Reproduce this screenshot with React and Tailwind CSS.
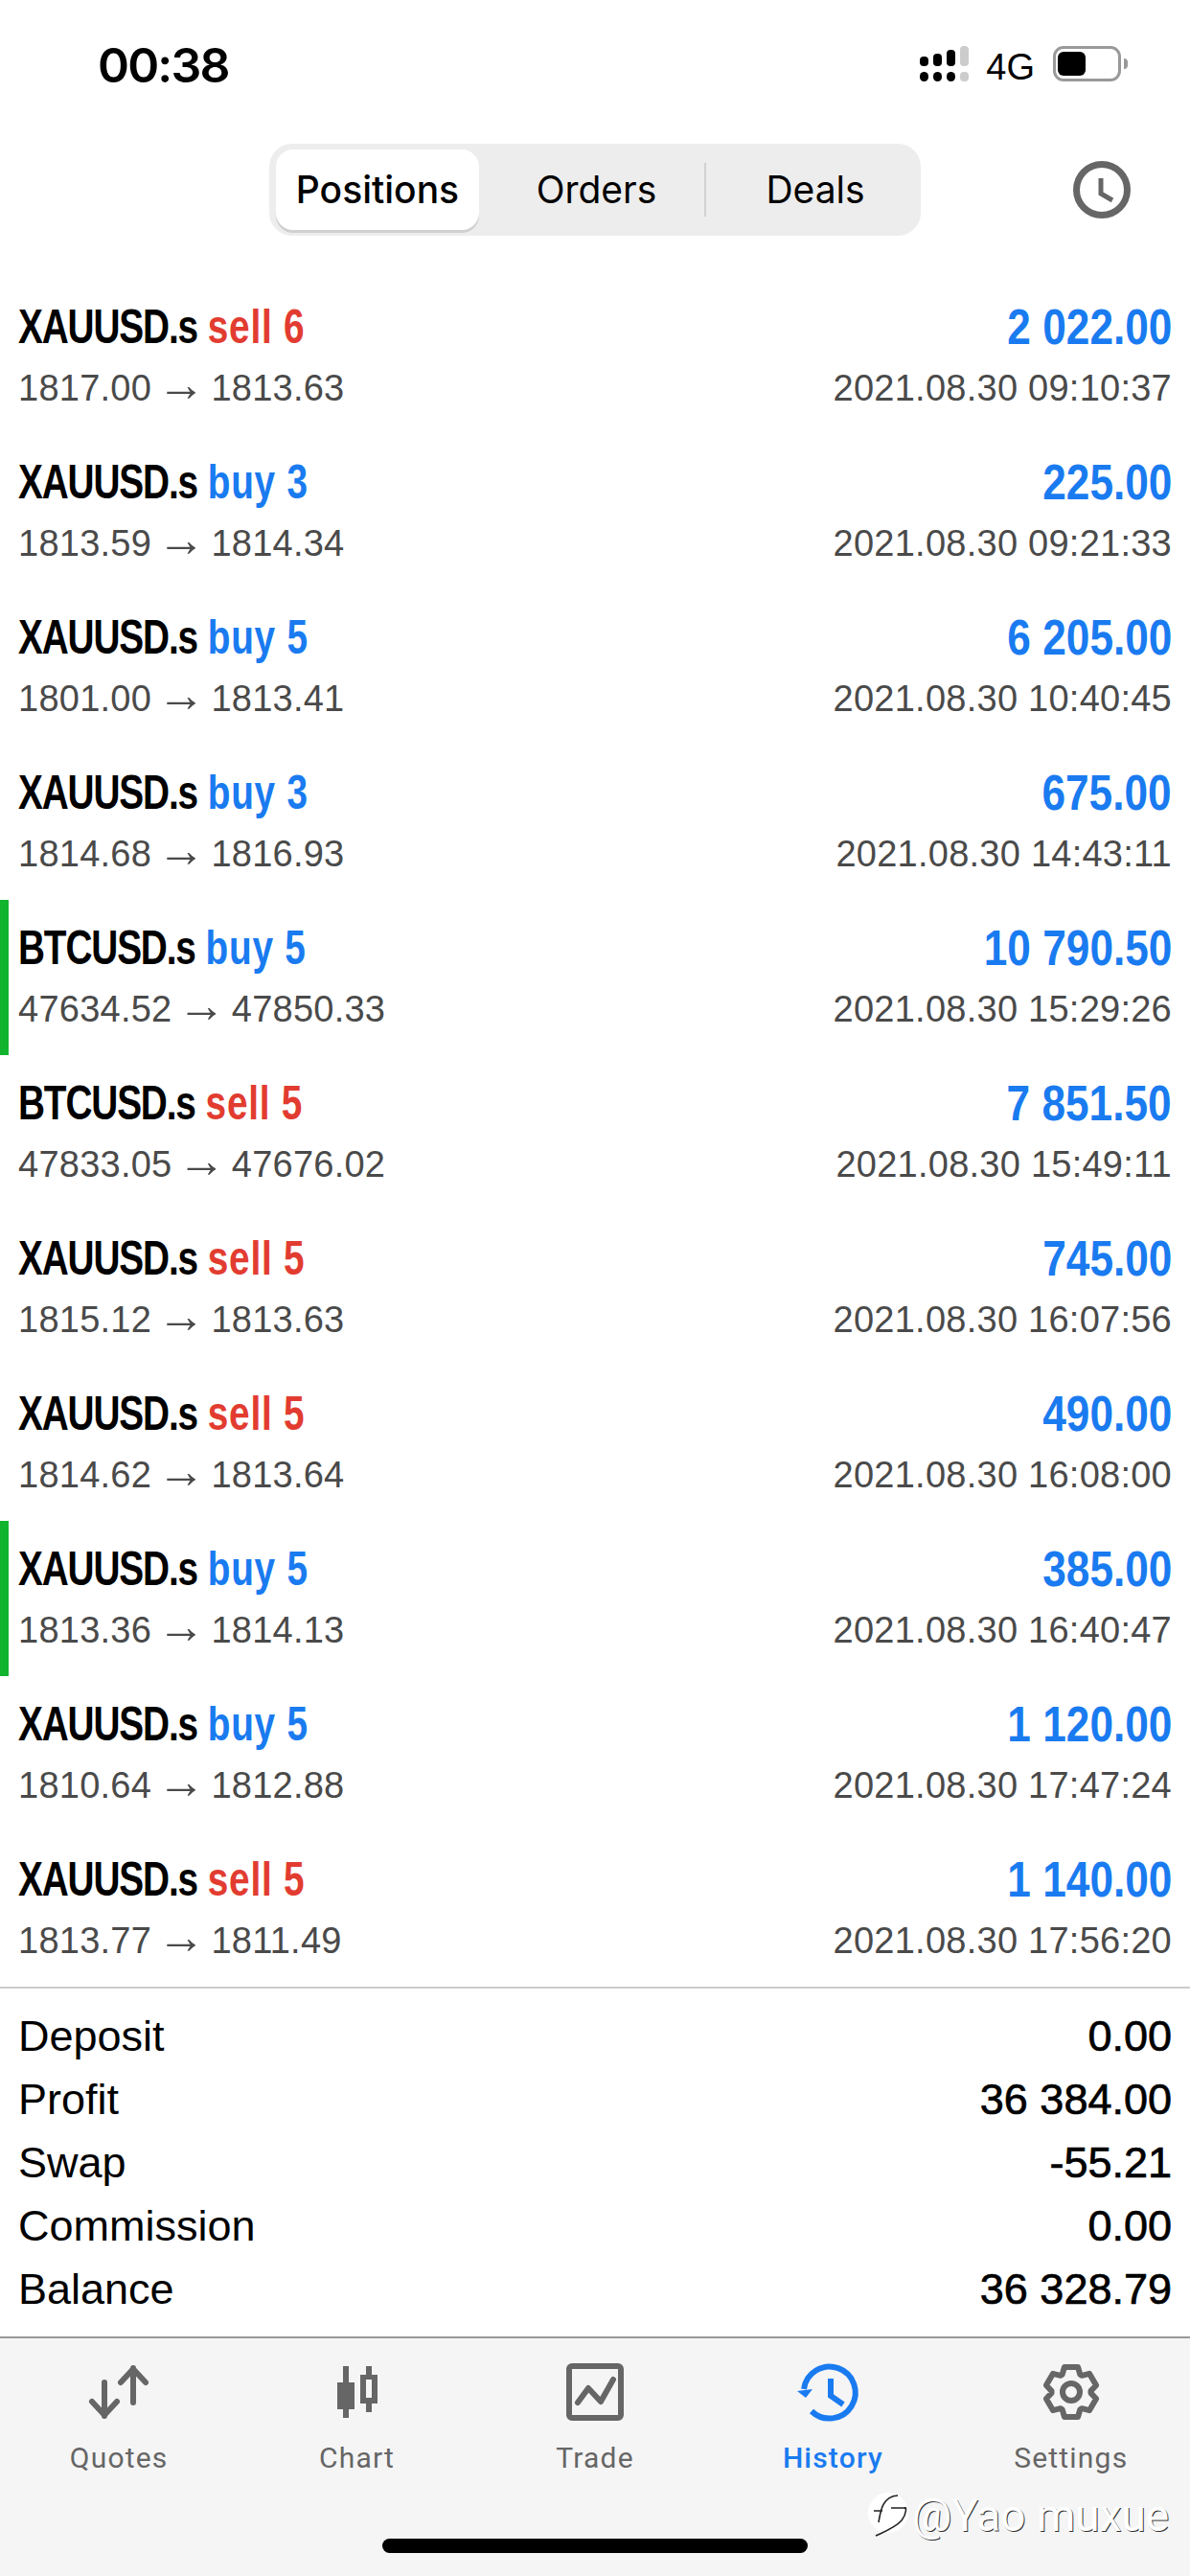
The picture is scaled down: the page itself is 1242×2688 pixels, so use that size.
const TRADES = [
  { sym: "XAUUSD.s", side: "sell", lots: 6, route: ["1817.00", "1813.63"], profit: "2 022.00", time: "2021.08.30 09:10:37" },
  { sym: "XAUUSD.s", side: "buy", lots: 3, route: ["1813.59", "1814.34"], profit: "225.00", time: "2021.08.30 09:21:33" },
  { sym: "XAUUSD.s", side: "buy", lots: 5, route: ["1801.00", "1813.41"], profit: "6 205.00", time: "2021.08.30 10:40:45" },
  { sym: "XAUUSD.s", side: "buy", lots: 3, route: ["1814.68", "1816.93"], profit: "675.00", time: "2021.08.30 14:43:11" },
  { sym: "BTCUSD.s", side: "buy", lots: 5, route: ["47634.52", "47850.33"], profit: "10 790.50", time: "2021.08.30 15:29:26", mark: true },
  { sym: "BTCUSD.s", side: "sell", lots: 5, route: ["47833.05", "47676.02"], profit: "7 851.50", time: "2021.08.30 15:49:11" },
  { sym: "XAUUSD.s", side: "sell", lots: 5, route: ["1815.12", "1813.63"], profit: "745.00", time: "2021.08.30 16:07:56" },
  { sym: "XAUUSD.s", side: "sell", lots: 5, route: ["1814.62", "1813.64"], profit: "490.00", time: "2021.08.30 16:08:00" },
  { sym: "XAUUSD.s", side: "buy", lots: 5, route: ["1813.36", "1814.13"], profit: "385.00", time: "2021.08.30 16:40:47", mark: true },
  { sym: "XAUUSD.s", side: "buy", lots: 5, route: ["1810.64", "1812.88"], profit: "1 120.00", time: "2021.08.30 17:47:24" },
  { sym: "XAUUSD.s", side: "sell", lots: 5, route: ["1813.77", "1811.49"], profit: "1 140.00", time: "2021.08.30 17:56:20" },
];

const SUMMARY = [
  ["Deposit", "0.00"],
  ["Profit", "36 384.00"],
  ["Swap", "-55.21"],
  ["Commission", "0.00"],
  ["Balance", "36 328.79"],
];

// gear outline, 6 teeth, tooth pointing straight up
const gearPath = () => {
  const pt = (r, deg) => {
    const a = (deg * Math.PI) / 180;
    return `${(35 + r * Math.cos(a)).toFixed(1)} ${(30 + r * Math.sin(a)).toFixed(1)}`;
  };
  let d = "";
  for (let i = 0; i < 6; i++) {
    const a = -90 + i * 60;
    d += `${i ? "L" : "M"}${pt(20.5, a - 27)} L${pt(27, a - 15)} L${pt(27, a + 15)} L${pt(20.5, a + 27)} `;
  }
  return d + "Z";
};

const QuotesIcon = () => (
  <svg viewBox="0 0 70 60" className="h-[60px] w-[70px] overflow-visible" fill="none" stroke="#666666" strokeWidth="6" strokeLinecap="round" strokeLinejoin="round">
    <path d="M50 41V5M37 20L50 6L63 20" />
    <path d="M20 20V55M7 40L20 54L33 40" />
  </svg>
);

const ChartIcon = () => (
  <svg viewBox="0 0 70 60" className="h-[60px] w-[70px] overflow-visible" fill="#666666">
    <rect x="20" y="3" width="6" height="54" />
    <rect x="14" y="20" width="18" height="28" />
    <rect x="44" y="3" width="6" height="48" />
    <rect x="38" y="12" width="18" height="30" />
    <rect x="44" y="17" width="6" height="19" fill="#f5f5f5" />
  </svg>
);

const TradeIcon = () => (
  <svg viewBox="0 0 70 60" className="h-[60px] w-[70px] overflow-visible" fill="none" stroke="#666666" strokeWidth="6">
    <rect x="8" y="3" width="54" height="54" rx="3" />
    <path d="M17 41L28 26L41 40L54 17" strokeLinecap="round" strokeLinejoin="round" />
  </svg>
);

const HistoryIcon = () => (
  <svg viewBox="0 0 70 60" className="h-[60px] w-[70px] overflow-visible" fill="none" stroke="#1a7bf0" strokeWidth="6">
    <path d="M5 27A27 27 0 1 1 13 50" />
    <path d="M33 16V34L46 43" />
    <path d="M-2 29L14 27L7 36Z" fill="#1a7bf0" stroke="none" />
  </svg>
);

const SettingsIcon = () => (
  <svg viewBox="0 0 70 60" className="h-[60px] w-[70px] overflow-visible" fill="none" stroke="#666666" strokeWidth="6" strokeLinejoin="round">
    <path d={gearPath()} />
    <circle cx="35" cy="30" r="9" />
  </svg>
);

const TABS = [
  { label: "Quotes", Icon: QuotesIcon },
  { label: "Chart", Icon: ChartIcon },
  { label: "Trade", Icon: TradeIcon },
  { label: "History", Icon: HistoryIcon, active: true },
  { label: "Settings", Icon: SettingsIcon },
];

function StatusBar() {
  return (
    <div className="flex h-[150px] items-start justify-between pl-[102px] pr-[65px] pt-[43px]">
      <span className="font-['Inter',sans-serif] text-[50px] font-semibold leading-[50px] tracking-[-1.8px] text-black">00:38</span>
      <div className="flex items-start pt-[5px]">
        <svg viewBox="0 0 52 37" className="h-[37px] w-[52px]" fill="#000000">
          <rect x="1" y="11" width="9" height="10" rx="4" />
          <rect x="15" y="8" width="9" height="13" rx="4" />
          <rect x="29" y="4" width="9" height="17" rx="4" />
          <rect x="43" y="0" width="9" height="21" rx="4" fill="#cccccc" />
          <rect x="1" y="27" width="9" height="10" rx="4.5" />
          <rect x="15" y="27" width="9" height="10" rx="4.5" />
          <rect x="29" y="27" width="9" height="10" rx="4.5" />
          <rect x="43" y="27" width="9" height="10" rx="4" fill="#cccccc" />
        </svg>
        <span className="ml-[18px] text-[38px] leading-[44px] text-black">4G</span>
        <div className="ml-[19px] flex h-[37px] w-[71px] items-center rounded-[11px] border-[3px] border-[#999999] pl-[2px]">
          <div className="h-[25px] w-[29px] rounded-[6px] bg-black" />
        </div>
        <div className="ml-[3px] mt-[13px] h-[11px] w-[4px] rounded-r-[4px] bg-[#999999]" />
      </div>
    </div>
  );
}

function Header() {
  return (
    <div className="mb-[45px] flex h-[96px] items-center pl-[281px]">
      <div className="flex h-[96px] w-[680px] items-center rounded-[24px] bg-[#ededed] pl-[7px] pr-[6px] font-['Inter',sans-serif] text-[39px] text-black">
        <div className="flex h-[84px] w-[212px] items-center justify-center rounded-[18px] bg-white font-medium shadow-[0_3px_0_#d0d0d0]">Positions</div>
        <div className="w-[235px] pl-[10px] text-center">Orders</div>
        <div className="h-[56px] w-[2px] bg-[#d2d2d2]" />
        <div className="flex-1 pl-[10px] text-center">Deals</div>
      </div>
      <svg viewBox="0 0 60 60" className="ml-[159px] h-[60px] w-[60px]" fill="none" stroke="#666666">
        <circle cx="30" cy="30" r="26.5" strokeWidth="7" />
        <path d="M29 18V34L41 41" strokeWidth="5" />
      </svg>
    </div>
  );
}

function TradeRow({ t }) {
  return (
    <div className={`flex h-[162px] justify-between pr-[19px] pt-[20px] ${t.mark ? "border-l-[9px] border-[#12b42e] pl-[10px]" : "pl-[19px]"}`}>
      <div>
        {/* no condensed family installed, so the bold face is squeezed */}
        <div className="origin-left scale-x-[0.775] whitespace-nowrap text-[50px] font-bold leading-[60px]">
          <span className="tracking-[-1.45px] text-black">{t.sym}</span>{" "}
          <span className={`tracking-[1px] ${t.side === "sell" ? "text-[#e23c31]" : "text-[#1a7bf0]"}`}>{t.side} {t.lots}</span>
        </div>
        <div className="mt-[12px] flex h-[44px] items-center whitespace-nowrap text-[38px] leading-[44px] tracking-[0.25px] text-[#4a4a4a]">
          <span>{t.route[0]}</span>
          <span className="mx-[6px] -translate-y-[4px] text-[50px] leading-[44px]">→</span>
          <span>{t.route[1]}</span>
        </div>
      </div>
      <div className="text-right">
        <div className="origin-right scale-x-[0.85] whitespace-nowrap text-[52px] font-bold leading-[60px] text-[#1a7bf0]">{t.profit}</div>
        <div className="mt-[12px] text-[38px] leading-[44px] tracking-[0.25px] text-[#4a4a4a]">{t.time}</div>
      </div>
    </div>
  );
}

function Summary() {
  return (
    <div className="border-t-2 border-[#cccccc] pb-[16px] pl-[19px] pr-[19px] pt-[17px] text-[45px] leading-[66px] text-black">
      {SUMMARY.map(([k, v]) => (
        <div key={k} className="flex justify-between">
          <span>{k}</span>
          <span className="[-webkit-text-stroke:0.7px_black]">{v}</span>
        </div>
      ))}
    </div>
  );
}

function TabBar() {
  return (
    <div className="relative grid h-[250px] grid-cols-5 border-t-2 border-[#999999] bg-[#f5f5f5] font-['Roboto',sans-serif]">
      {TABS.map(({ label, Icon, active }) => (
        <div key={label} className="flex flex-col items-center pt-[26px]">
          <Icon />
          <span className={`mt-[21px] text-[30px] leading-[36px] tracking-[1.2px] ${active ? "font-medium text-[#1a7bf0]" : "text-[#666666]"}`}>{label}</span>
        </div>
      ))}
      <div className="absolute left-[399px] top-[209px] h-[15px] w-[444px] rounded-full bg-black" />
      <div className="absolute left-[906px] top-[160px] flex items-center">
        <svg viewBox="0 0 44 50" className="h-[50px] w-[44px]" fill="none" stroke="#222222" strokeWidth="1.6">
          <circle cx="21" cy="22" r="21" fill="#ffffff" stroke="none" />
          <path d="M8 46C14 43 28 38 35 30C41 22 40 14 38 18" fill="#ffffff" />
          <path d="M11 32C13 20 15 5 31 4M6 20H15M24 17H40" />
        </svg>
        <span className="ml-[2px] text-[46px] leading-[50px] text-white [text-shadow:1px_1px_0_#333333]">@Yao muxue</span>
      </div>
    </div>
  );
}

export default function App() {
  return (
    <div className="flex h-[2688px] w-[1242px] flex-col overflow-hidden bg-white font-['Liberation_Sans',sans-serif]">
      <StatusBar />
      <Header />
      <div>
        {TRADES.map((t, i) => (
          <TradeRow key={i} t={t} />
        ))}
      </div>
      <Summary />
      <TabBar />
    </div>
  );
}
